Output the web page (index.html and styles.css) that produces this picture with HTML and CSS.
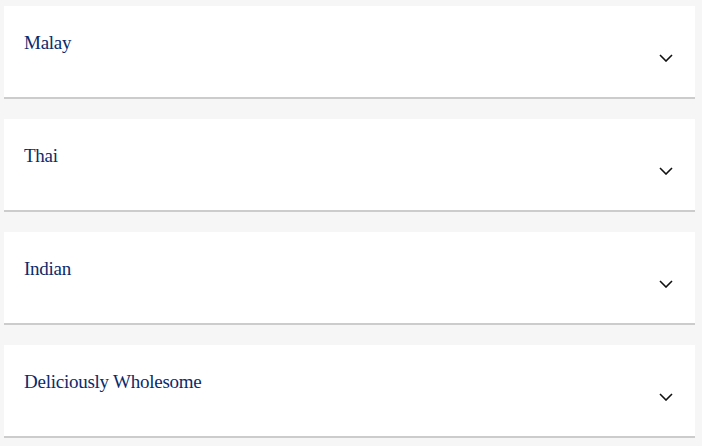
FILE: index.html
```html
<!DOCTYPE html>
<html lang="en">
<head>
    <meta charset="UTF-8">
    <meta name="viewport" content="width=device-width, initial-scale=1.0">
    <title>Menu</title>
    <link rel="stylesheet" href="styles.css">
</head>
<body>
    <div class="accordion">
        <div class="panel">
            <span class="panel-title">Malay</span>
            <svg class="chevron" width="14" height="8" viewBox="0 0 14 8"><path d="M1 1 L7 7 L13 1" fill="none" stroke="#111" stroke-width="1.6"/></svg>
        </div>
        <div class="panel">
            <span class="panel-title">Thai</span>
            <svg class="chevron" width="14" height="8" viewBox="0 0 14 8"><path d="M1 1 L7 7 L13 1" fill="none" stroke="#111" stroke-width="1.6"/></svg>
        </div>
        <div class="panel">
            <span class="panel-title">Indian</span>
            <svg class="chevron" width="14" height="8" viewBox="0 0 14 8"><path d="M1 1 L7 7 L13 1" fill="none" stroke="#111" stroke-width="1.6"/></svg>
        </div>
        <div class="panel">
            <span class="panel-title">Deliciously Wholesome</span>
            <svg class="chevron" width="14" height="8" viewBox="0 0 14 8"><path d="M1 1 L7 7 L13 1" fill="none" stroke="#111" stroke-width="1.6"/></svg>
        </div>
    </div>
</body>
</html>
```

FILE: styles.css
```css
body {
    margin: 0;
    padding: 6px 7px 0 4px;
    background-color: #f6f6f6;
    font-family: "Liberation Serif", serif;
}

.accordion {
    display: flex;
    flex-direction: column;
    gap: 20px;
}

.panel {
    display: flex;
    justify-content: space-between;
    align-items: flex-start;
    height: 67px;
    padding: 24px 22px 0 20px;
    background-color: #fff;
    border-bottom: 2px solid #cccccc;
}

.panel-title {
    font-size: 19px;
    line-height: 25px;
    letter-spacing: -0.25px;
    color: #0c2a6b;
}

.chevron {
    margin-top: 24px;
}
```
